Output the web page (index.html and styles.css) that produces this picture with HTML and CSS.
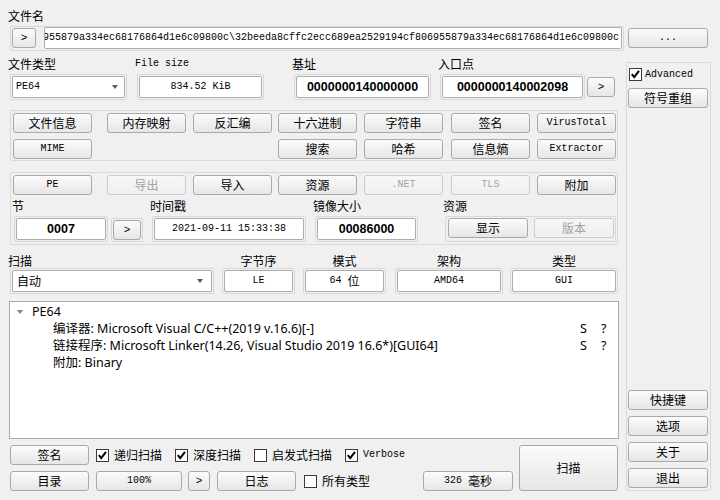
FILE: index.html
```html
<!DOCTYPE html>
<html>
<head>
<meta charset="utf-8">
<link rel="stylesheet" href="styles.css">
</head>
<body>
<div class="win">
  <div class="lbl top-lbl">文件名</div>
  <div class="file-row">
    <div class="frame file-frame">
      <div class="btn arr-btn"><span class="gt">&gt;</span></div>
      <div class="input path"><span class="m">955879a334ec68176864d1e6c09800c\32beeda8cffc2ecc689ea2529194cf806955879a334ec68176864d1e6c09800c</span></div>
    </div>
    <div class="btn dots"><span class="m">...</span></div>
  </div>

  <div class="main">
    <div class="left">
      <div class="fields top-fields">
        <div class="fcol c-type">
          <div class="lbl">文件类型</div>
          <div class="frame"><div class="combo w-type"><span class="m">PE64</span><i class="caret"></i></div></div>
        </div>
        <div class="fcol c-size">
          <div class="lbl m">File size</div>
          <div class="frame"><div class="input w-size"><span class="m">834.52 KiB</span></div></div>
        </div>
        <div class="fcol c-base">
          <div class="lbl">基址</div>
          <div class="frame"><div class="input w-base b">0000000140000000</div></div>
        </div>
        <div class="fcol c-entry">
          <div class="lbl">入口点</div>
          <div class="frame"><div class="input w-entry b">0000000140002098</div></div>
        </div>
        <div class="btn entry-go"><span class="gt">&gt;</span></div>
      </div>

      <div class="frame group g1">
        <div class="bgrid">
          <div class="btn">文件信息</div>
          <div class="btn">内存映射</div>
          <div class="btn">反汇编</div>
          <div class="btn">十六进制</div>
          <div class="btn">字符串</div>
          <div class="btn">签名</div>
          <div class="btn"><span class="m">VirusTotal</span></div>
          <div class="btn col1"><span class="m">MIME</span></div>
          <div class="btn col4">搜索</div>
          <div class="btn col5">哈希</div>
          <div class="btn col6">信息熵</div>
          <div class="btn col7"><span class="m">Extractor</span></div>
        </div>
      </div>

      <div class="frame group g2">
        <div class="bgrid">
          <div class="btn"><span class="m">PE</span></div>
          <div class="btn dis">导出</div>
          <div class="btn">导入</div>
          <div class="btn">资源</div>
          <div class="btn dis"><span class="m">.NET</span></div>
          <div class="btn dis"><span class="m">TLS</span></div>
          <div class="btn">附加</div>
        </div>
        <div class="fields pe-fields">
          <div class="fcol c-sect">
            <div class="lbl">节</div>
            <div class="frame"><div class="input w-sect b">0007</div></div>
          </div>
          <div class="frame go-frame"><div class="btn go-btn"><span class="gt">&gt;</span></div></div>
          <div class="fcol c-time">
            <div class="lbl">时间戳</div>
            <div class="frame"><div class="input w-time"><span class="m">2021-09-11 15:33:38</span></div></div>
          </div>
          <div class="fcol c-img">
            <div class="lbl">镜像大小</div>
            <div class="frame"><div class="input w-img b">00086000</div></div>
          </div>
          <div class="fcol c-res">
            <div class="lbl">资源</div>
            <div class="frame res-frame">
              <div class="btn w80">显示</div>
              <div class="btn w80 dis">版本</div>
            </div>
          </div>
        </div>
      </div>

      <div class="fields scan-fields">
        <div class="fcol c-scan">
          <div class="lbl">扫描</div>
          <div class="frame"><div class="combo w-scan"><span>自动</span><i class="caret"></i></div></div>
        </div>
        <div class="fcol ctr c-end">
          <div class="lbl">字节序</div>
          <div class="frame"><div class="input w-end"><span class="m">LE</span></div></div>
        </div>
        <div class="fcol ctr c-mode">
          <div class="lbl">模式</div>
          <div class="frame"><div class="input w-mode"><span class="m">64&nbsp;</span>位</div></div>
        </div>
        <div class="fcol ctr c-arch">
          <div class="lbl">架构</div>
          <div class="frame"><div class="input w-arch"><span class="m">AMD64</span></div></div>
        </div>
        <div class="fcol ctr c-kind">
          <div class="lbl">类型</div>
          <div class="frame"><div class="input w-kind"><span class="m">GUI</span></div></div>
        </div>
      </div>

      <div class="tree">
        <div class="trow"><i class="tri"></i><span class="tname">PE64</span></div>
        <div class="trow child"><span class="tname">编译器: Microsoft Visual C/C++(2019 v.16.6)[-]</span><span class="ts">S</span><span class="tq">?</span></div>
        <div class="trow child"><span class="tname">链接程序: Microsoft Linker(14.26, Visual Studio 2019 16.6*)[GUI64]</span><span class="ts">S</span><span class="tq">?</span></div>
        <div class="trow child"><span class="tname">附加: Binary</span></div>
      </div>

      <div class="bottom">
        <div class="bl">
          <div class="brow">
            <div class="btn w79 first">签名</div>
            <div class="chk chk-first"><span class="box"><svg width="11" height="11" viewBox="0 0 11 11"><path d="M1.8 5.2 L4.2 8.2 L9 1.8"/></svg></span><span>递归扫描</span></div>
            <div class="chk"><span class="box"><svg width="11" height="11" viewBox="0 0 11 11"><path d="M1.8 5.2 L4.2 8.2 L9 1.8"/></svg></span><span>深度扫描</span></div>
            <div class="chk"><span class="box"></span><span>启发式扫描</span></div>
            <div class="chk"><span class="box"><svg width="11" height="11" viewBox="0 0 11 11"><path d="M1.8 5.2 L4.2 8.2 L9 1.8"/></svg></span><span class="m">Verbose</span></div>
          </div>
          <div class="brow">
            <div class="btn w79 first">目录</div>
            <div class="btn w86 pct"><span class="m">100%</span></div>
            <div class="btn zoom-go"><span class="gt">&gt;</span></div>
            <div class="btn w79 log">日志</div>
            <div class="chk all-types"><span class="box"></span><span>所有类型</span></div>
            <div class="btn time-btn"><span class="m">326&nbsp;</span>毫秒</div>
          </div>
        </div>
        <div class="btn scan-btn">扫描</div>
      </div>
    </div>

    <div class="right">
      <div class="adv"><span class="box"><svg width="11" height="11" viewBox="0 0 11 11"><path d="M1.8 5.2 L4.2 8.2 L9 1.8"/></svg></span><span class="m">Advanced</span></div>
      <div class="btn sym">符号重组</div>
      <div class="rbtns">
        <div class="btn">快捷键</div>
        <div class="btn">选项</div>
        <div class="btn">关于</div>
        <div class="btn">退出</div>
      </div>
    </div>
  </div>
</div>
</body>
</html>
```

FILE: styles.css
```css
* { box-sizing: border-box; margin: 0; padding: 0; }
html, body { width: 720px; height: 500px; overflow: hidden; }
body {
  background: #f0f0f0;
  color: #000;
  font-family: "Noto Sans CJK SC", "Noto Sans", sans-serif;
  font-size: 12px;
  line-height: 14px;
}
.m { font-family: "Liberation Mono", "Noto Sans CJK SC", monospace; font-size: 10px; }
.b { font-family: "Liberation Sans", sans-serif; font-weight: bold; font-size: 12.5px; }
.gt { font-family: "Liberation Mono", monospace; font-size: 11px; }

.win { padding-top: 9px; }
.lbl { height: 14px; line-height: 14px; white-space: nowrap; }
.top-lbl { margin-left: 8px; }

.frame { border: 1px solid #d9d9d9; border-radius: 2px; padding: 1px; }

.btn {
  flex: none;
  height: 20px;
  border: 1px solid #a9a9a9;
  border-radius: 3px;
  background: linear-gradient(#fbfbfb, #e6e6e6);
  display: flex;
  align-items: center;
  justify-content: center;
  white-space: nowrap;
}
.btn.dis { color: #a2a2a2; border-color: #cbcbcb; background: linear-gradient(#f7f7f7, #efefef); }

.input {
  height: 22px;
  background: #fff;
  border: 1px solid #adadad;
  border-radius: 2px;
  display: flex;
  align-items: center;
  justify-content: center;
  white-space: nowrap;
  overflow: hidden;
}
.combo {
  height: 22px;
  background: #fff;
  border: 1px solid #adadad;
  border-radius: 2px;
  display: flex;
  align-items: center;
  justify-content: space-between;
  padding: 0 6px 0 3px;
}
.caret {
  width: 0; height: 0;
  border-left: 3.5px solid transparent;
  border-right: 3.5px solid transparent;
  border-top: 4px solid #5c5c5c;
}

/* file name row */
.file-row { display: flex; margin-top: 3px; height: 25px; }
.file-frame { margin-left: 10px; width: 614px; height: 25px; padding: 0; display: flex; align-items: flex-start; }
.arr-btn { width: 24px; margin: 1px 0 0 1px; }
.path { width: 578px; margin-left: 8px; justify-content: flex-end; padding-right: 2px; }
.dots { width: 80px; margin: 2px 0 0 4px; }

/* main */
.main { display: flex; margin-top: 6px; }
.left { margin-left: 8px; width: 612px; flex: none; }

.fields { display: flex; align-items: flex-end; }
.fcol { display: flex; flex-direction: column; flex: none; }
.fcol > .frame { margin-left: 2px; }
.fcol.ctr > .frame { margin-left: 0; }
.fcol.ctr > .lbl { text-align: center; }

.top-fields .lbl { margin-bottom: 3px; }
.c-size { margin-left: 8px; }
.c-base { margin-left: 28px; }
.c-entry { margin-left: 7px; }
.w-type { width: 113px; }
.w-size { width: 123px; }
.w-base { width: 133px; }
.w-entry { width: 141px; }
.entry-go { width: 28px; margin: 0 0 3px 2px; }

.group { margin-left: 2px; width: 608px; padding: 2px 1px 1px 2px; }
.g1 { margin-top: 10px; }
.g2 { margin-top: 11px; padding-bottom: 2px; }
.bgrid {
  display: grid;
  grid-template-columns: 94px 86px 85px 86px 87px 86px 79px;
  grid-auto-rows: 20px;
  row-gap: 6px;
}
.bgrid .btn { width: 79px; }
.col1 { grid-column: 1; }
.col4 { grid-column: 4; }
.col5 { grid-column: 5; }
.col6 { grid-column: 6; }
.col7 { grid-column: 7; }

.pe-fields { margin-top: 4px; }
.pe-fields .lbl { margin-bottom: 3px; }
.c-sect { margin-left: -1px; }
.w-sect { width: 90px; }
.go-frame { margin-left: 3px; width: 32px; }
.go-btn { width: 28px; }
.c-time { margin-left: 7px; }
.w-time { width: 150px; }
.c-img { margin-left: 7px; }
.w-img { width: 99px; }
.c-res { margin-left: 25px; }
.res-frame { width: 171px; height: 26px; display: flex; gap: 6px; padding: 1px 2px; }
.w80 { width: 80px; }

.scan-fields { margin-top: 9px; }
.w-scan { width: 200px; padding-left: 4px; padding-right: 8px; }
.c-end { margin-left: 8px; }
.w-end { width: 69px; }
.c-mode { margin-left: 8px; }
.w-mode { width: 79px; }
.c-arch { margin-left: 9px; }
.w-arch { width: 104px; }
.c-kind { margin-left: 7px; }
.w-kind { width: 104px; }

/* result tree */
.tree {
  margin: 7px 0 0 1px;
  width: 610px;
  height: 138px;
  background: #fff;
  border: 1px solid #a9a9a9;
  padding-top: 1px;
  font-family: "Noto Sans", "Noto Sans CJK SC", sans-serif;
  font-size: 12.5px;
}
.trow { display: flex; align-items: center; height: 17px; line-height: 17px; padding-left: 7px; white-space: nowrap; }
.trow.child { padding-left: 43px; }
.tri {
  width: 0; height: 0;
  border-left: 3.5px solid transparent;
  border-right: 3.5px solid transparent;
  border-top: 4px solid #808080;
  margin-right: 9px;
}
.tname { flex: 1; }
.ts { width: 21px; }
.tq { width: 17px; }

/* checkboxes */
.box {
  width: 13px; height: 13px;
  background: #fff;
  border: 1px solid #3a3a3a;
  display: inline-flex;
  align-items: center;
  justify-content: center;
  flex: none;
}
.box svg path { fill: none; stroke: #000; stroke-width: 2; }
.chk { display: flex; align-items: center; gap: 5px; margin-right: 13px; white-space: nowrap; }

/* bottom */
.bottom { display: flex; margin-top: 6px; }
.bl { width: 505px; display: flex; flex-direction: column; gap: 6px; }
.brow { display: flex; align-items: center; height: 20px; }
.w79 { width: 79px; }
.w86 { width: 86px; }
.first { margin-left: 2px; }
.chk-first { margin-left: 7px; }
.pct { margin-left: 7px; }
.zoom-go { width: 22px; margin-left: 6px; }
.log { margin-left: 7px; }
.all-types { margin-left: 8px; }
.time-btn { width: 90px; margin-left: auto; }
.scan-btn { width: 99px; height: 46px; margin-left: 6px; }

/* right panel */
.right {
  margin: 5px 0 0 6px;
  width: 85px;
  height: 429px;
  flex: none;
  border: 1px solid #d9d9d9;
  border-radius: 2px;
  display: flex;
  flex-direction: column;
  padding-bottom: 2px;
}
.adv { display: flex; align-items: center; gap: 3px; margin: 5px 0 0 2px; height: 13px; }
.sym { width: 80px; margin: 7px 0 0 1px; }
.rbtns { margin-top: auto; margin-left: 1px; display: flex; flex-direction: column; gap: 6px; }
.rbtns .btn { width: 80px; }
```
